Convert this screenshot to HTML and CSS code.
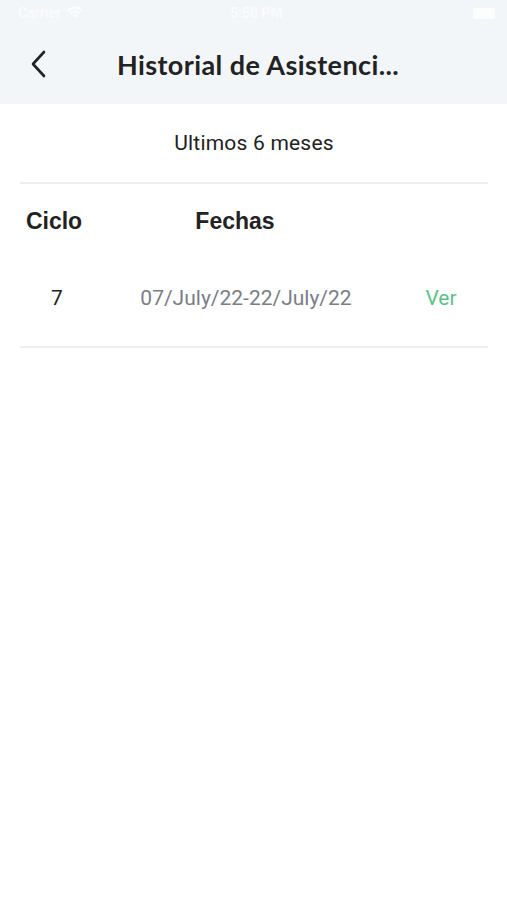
FILE: index.html
```html
<!DOCTYPE html>
<html lang="es">
<head>
  <meta charset="UTF-8" />
  <title>Historial de Asistencia</title>
  <link rel="stylesheet" href="styles.css">
</head>
<body>
  <div class="header">
    <div class="status">
      <div class="status-left">
        <span>Carrier</span>
        <svg width="16" height="12" viewBox="0 0 16 12"><path d="M8 11 L5.5 8.2 A3.6 3.6 0 0 1 10.5 8.2 Z M2.8 5.6 A7.4 7.4 0 0 1 13.2 5.6 L11.8 7 A5.4 5.4 0 0 0 4.2 7 Z M0.2 3 A11 11 0 0 1 15.8 3 L14.4 4.4 A9 9 0 0 0 1.6 4.4 Z" fill="#fff"/></svg>
      </div>
      <span class="status-time">5:50 PM</span>
      <div class="battery"></div>
    </div>
    <div class="nav">
      <svg class="back" width="20" height="28" viewBox="0 0 20 28"><path d="M15 2 L4 14 L15 26" fill="none" stroke="#222" stroke-width="2.6" stroke-linecap="round" stroke-linejoin="round"/></svg>
      <h1 class="title">Historial de Asistenci...</h1>
    </div>
  </div>

  <div class="content">
    <p class="period">Ultimos 6 meses</p>
    <div class="table">
      <div class="row head">
        <span class="col-cycle head-cycle">Ciclo</span>
        <span class="col-dates head-dates">Fechas</span>
        <span></span>
      </div>
      <div class="row item">
        <span class="col-cycle">7</span>
        <span class="col-dates dates">07/July/22-22/July/22</span>
        <a class="see" href="#">Ver</a>
      </div>
    </div>
  </div>
</body>
</html>
```

FILE: styles.css
```css
body {
  margin: 0;
  background: #ffffff;
  font-family: Roboto, "Liberation Sans", Arial, sans-serif;
  color: #222;
}
.header {
  background: #f3f6f9;
  height: 104px;
}
.status {
  height: 26px;
  display: flex;
  align-items: center;
  justify-content: space-between;
  padding: 0 12px 0 18px;
  color: rgba(255, 255, 255, 0.8);
  font-size: 14px;
  font-weight: 600;
  opacity: 0.8;
}
.status-left {
  display: flex;
  align-items: center;
  gap: 6px;
  width: 120px;
}
.status-time {
  text-align: center;
}
.battery {
  width: 22px;
  height: 11px;
  background: #fff;
  border-radius: 3px;
  margin-left: 98px;
}
.nav {
  display: flex;
  align-items: center;
  height: 78px;
  padding-left: 29px;
}
.back {
  margin-top: -2px;
}
.title {
  margin: -2px 0 0 68px;
  font-family: Lato, "Open Sans", sans-serif;
  font-weight: 700;
  font-size: 27px;
  letter-spacing: 0.4px;
  color: #222;
}
.content {
  padding: 0 19px 0 20px;
}
.period {
  margin: 0;
  height: 78px;
  line-height: 78px;
  text-align: center;
  font-size: 21px;
  letter-spacing: 0.2px;
  color: #222;
  border-bottom: 2px solid #eeeeee;
}
.row {
  display: grid;
  grid-template-columns: 74px 1fr 90px;
  align-items: center;
  text-align: center;
}
.head {
  height: 74px;
  font-family: "Liberation Sans", Arial, sans-serif;
  font-weight: 700;
  font-size: 23px;
  color: #222;
}
.head-cycle {
  padding-right: 6px;
}
.head-dates {
  padding-right: 22px;
}
.item {
  height: 80px;
  padding-bottom: 8px;
  font-size: 21px;
  border-bottom: 2px solid #eeeeee;
}
.dates {
  color: #7a7e86;
}
.see {
  color: #5cbf8c;
  text-decoration: none;
  padding-right: 4px;
}
```
